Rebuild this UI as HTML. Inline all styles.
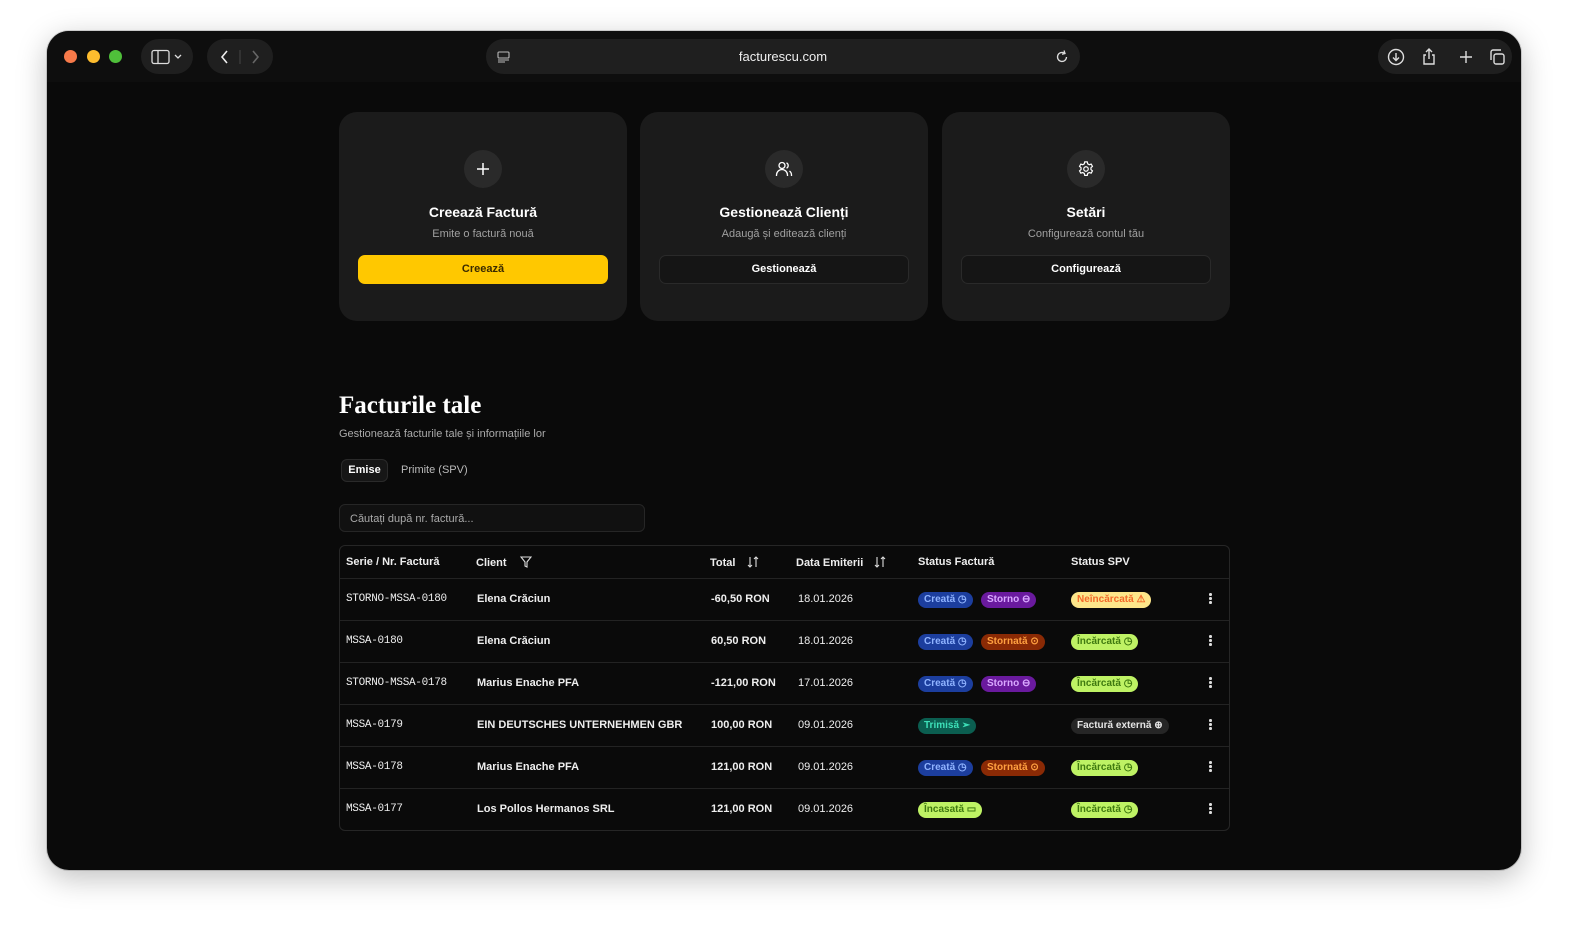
<!DOCTYPE html>
<html><head><meta charset="utf-8"><style>
*{box-sizing:border-box;margin:0;padding:0}
body{width:1596px;height:950px;background:#fff;font-family:"Liberation Sans",sans-serif;position:relative;overflow:hidden;color:#fff}
.win{position:absolute;left:47px;top:31px;width:1474px;height:839px;border-radius:22px;background:#0a0a0a;overflow:hidden;box-shadow:0 8px 30px rgba(0,0,0,.25),0 0 0 1px rgba(0,0,0,.15)}
.bar{position:absolute;left:0;top:0;width:100%;height:51px;background:#0e0e0e}
.dot{position:absolute;top:19px;width:13px;height:13px;border-radius:50%}
.pill{position:absolute;background:#1f1f1f;border-radius:18px}
.abs{position:absolute}
.card{position:absolute;top:81px;width:288px;height:209px;background:#1b1b1b;border-radius:18px;text-align:center}
.card .ic{position:absolute;left:125px;top:38px;width:38px;height:38px;border-radius:50%;background:#2a2a2a;display:flex;align-items:center;justify-content:center}
.card h3{position:absolute;top:92px;width:100%;font-size:14px;font-weight:bold}
.card p{position:absolute;top:116px;width:100%;font-size:11px;color:#a0a0a0}
.card .btn{position:absolute;left:19px;top:143px;width:250px;height:29px;border-radius:7px;background:#151515;border:1px solid #2a2a2a;font-size:11px;font-weight:bold;line-height:27px}
table{border-collapse:collapse}
.tbl{position:absolute;left:292px;top:514px;width:891px;height:286px;border:1px solid #262626;border-radius:6px;overflow:hidden}
.row{position:absolute;left:0;width:100%;height:42px;border-top:1px solid #232323;font-size:11px}
.row span{position:absolute;top:14px;font-weight:bold;color:#eee}
.mono{font-family:"Liberation Mono",monospace;font-weight:normal!important;letter-spacing:-.3px}
.b{position:absolute;top:13px;height:16px;border-radius:8px;font-size:10px;line-height:16px;padding:0 6px;font-weight:bold;white-space:nowrap}
.blue{background:#1c3e9e;color:#8fb3ff}.pur{background:#6a1a9e;color:#d9a8ff}.org{background:#8a2a05;color:#ffa040}
.ylw{background:#fde68a;color:#f36a2a}.grn{background:#bef264;color:#3f7a10}.teal{background:#0b5e50;color:#3de0b8}.gry{background:#262626;color:#e5e5e5}
.kebab{position:absolute;left:869px;top:14px;font-size:13px;color:#ddd;font-weight:bold;line-height:4px;width:4px;text-align:center}
.kebab i{display:block;width:2.5px;height:2.5px;background:#ddd;border-radius:50%;margin:0 0 1.5px}
.hd{position:absolute;top:10px;font-size:11px;font-weight:bold;color:#eee}
</style></head><body>
<div class="win">
<div class="bar">
<div class="dot" style="left:17px;background:#fe5f57;background:#f77a4a"></div>
<div class="dot" style="left:40px;background:#febc2e"></div>
<div class="dot" style="left:62px;background:#4fbf3a"></div>
<div class="pill" style="left:94px;top:8px;width:52px;height:35px"><svg class="abs" style="left:10px;top:10px" width="32" height="16" viewBox="0 0 32 16" fill="none" stroke="#ddd" stroke-width="1.3"><rect x="1" y="1.5" width="17" height="13" rx="2"/><line x1="7" y1="1.5" x2="7" y2="14.5"/><path d="M24 6l3 3 3-3"/></svg></div>
<div class="pill" style="left:160px;top:8px;width:66px;height:35px"><svg class="abs" style="left:10px;top:9px" width="48" height="18" viewBox="0 0 48 18" fill="none" stroke-width="1.6"><path d="M10 3l-5 6 5 6" stroke="#eee"/><line x1="23" y1="2" x2="23" y2="16" stroke="#444" stroke-width="1"/><path d="M36 3l5 6-5 6" stroke="#666"/></svg></div>
<div class="pill" style="left:439px;top:8px;width:594px;height:35px">
<svg class="abs" style="left:11px;top:12px" width="13" height="12" viewBox="0 0 13 12" fill="none" stroke="#bbb" stroke-width="1.1"><rect x="1" y="1" width="11" height="6" rx="1"/><line x1="1" y1="9" x2="12" y2="9"/><line x1="1" y1="11" x2="8" y2="11"/></svg>
<div class="abs" style="left:0;width:100%;top:10px;text-align:center;font-size:13px;color:#eee">facturescu.com</div>
<svg class="abs" style="left:569px;top:10px" width="14" height="15" viewBox="0 0 14 15" fill="none" stroke="#ddd" stroke-width="1.3"><path d="M11.5 8a4.5 4.5 0 1 1-2-3.8"/><path d="M9 1.5l1 3-3 .8"/></svg>
</div>
<div class="pill" style="left:1331px;top:8px;width:134px;height:35px">
<svg class="abs" style="left:8px;top:9px" width="120" height="18" viewBox="0 0 120 18" fill="none" stroke="#ddd" stroke-width="1.4"><circle cx="10" cy="9" r="7.5"/><path d="M10 5v7M7 9.5l3 3 3-3"/><path d="M40 7h-2v9h10V7h-2M43 1v10M40 4l3-3 3 3"/><path d="M74 9h12M80 3v12"/><rect x="108" y="6" width="10" height="10" rx="2"/><path d="M105 12V4a2 2 0 0 1 2-2h8"/></svg>
</div>
</div>

<div class="card" style="left:292px"><div class="ic"><svg width="14" height="14" viewBox="0 0 14 14" stroke="#fff" stroke-width="1.5"><path d="M7 1v12M1 7h12"/></svg></div><h3>Creează Factură</h3><p>Emite o factură nouă</p><div class="btn" style="background:#ffc800;border-color:#ffc800;color:#3a2a00">Creează</div></div>
<div class="card" style="left:593px"><div class="ic"><svg width="18" height="18" viewBox="0 0 18 18" fill="none" stroke="#fff" stroke-width="1.3"><circle cx="7" cy="5.5" r="3"/><path d="M1.5 16v-1a5 5 0 0 1 11 0v1"/><path d="M11.5 2.8a3 3 0 0 1 0 5.4M14.5 11a5 5 0 0 1 2 4v1"/></svg></div><h3>Gestionează Clienți</h3><p>Adaugă și editează clienți</p><div class="btn">Gestionează</div></div>
<div class="card" style="left:895px"><div class="ic"><svg width="18" height="18" viewBox="0 0 24 24" fill="none" stroke="#fff" stroke-width="1.6"><circle cx="12" cy="12" r="3"/><path d="M10.3 2.5h3.4l.6 2.6 2 1.2 2.6-.8 1.7 3-2 1.8v2.4l2 1.8-1.7 3-2.6-.8-2 1.2-.6 2.6h-3.4l-.6-2.6-2-1.2-2.6.8-1.7-3 2-1.8v-2.4l-2-1.8 1.7-3 2.6.8 2-1.2z"/></svg></div><h3>Setări</h3><p>Configurează contul tău</p><div class="btn">Configurează</div></div>

<div class="abs" style="left:292px;top:361px;font-family:'Liberation Serif',serif;font-size:25px;font-weight:bold">Facturile tale</div>
<div class="abs" style="left:292px;top:397px;font-size:11px;color:#aaa">Gestionează facturile tale și informațiile lor</div>
<div class="abs" style="left:294px;top:428px;width:47px;height:23px;border:1px solid #2a2a2a;background:#161616;border-radius:6px;font-size:11px;font-weight:bold;text-align:center;line-height:21px">Emise</div>
<div class="abs" style="left:354px;top:433px;font-size:11px;color:#bbb">Primite (SPV)</div>
<div class="abs" style="left:292px;top:473px;width:306px;height:28px;border:1px solid #262626;background:#111;border-radius:6px;font-size:11px;color:#aaa;padding:8px 10px">Căutați după nr. factură...</div>

<div class="tbl">
<div class="hd" style="left:6px">Serie / Nr. Factură</div>
<div class="hd" style="left:136px">Client <svg style="margin-left:10px;vertical-align:-2px" width="12" height="12" viewBox="0 0 12 12" fill="none" stroke="#ddd" stroke-width="1.1"><path d="M1 1h10L7 6v5L5 10V6z"/></svg></div>
<div class="hd" style="left:370px">Total <svg style="margin-left:8px;vertical-align:-2px" width="12" height="12" viewBox="0 0 12 12" fill="none" stroke="#ddd" stroke-width="1.1"><path d="M3 1v10M1 9l2 2 2-2M9 11V1M7 3l2-2 2 2"/></svg></div>
<div class="hd" style="left:456px">Data Emiterii <svg style="margin-left:8px;vertical-align:-2px" width="12" height="12" viewBox="0 0 12 12" fill="none" stroke="#ddd" stroke-width="1.1"><path d="M3 1v10M1 9l2 2 2-2M9 11V1M7 3l2-2 2 2"/></svg></div>
<div class="hd" style="left:578px">Status Factură</div>
<div class="hd" style="left:731px">Status SPV</div>

<div class="row" style="top:32px"><span class="mono" style="left:6px">STORNO-MSSA-0180</span><span style="left:137px">Elena Crăciun</span><span style="left:371px">-60,50 RON</span><span style="left:458px;font-weight:normal">18.01.2026</span><div class="b blue" style="left:578px">Creată ◷</div><div class="b pur" style="left:641px">Storno ⊖</div><div class="b ylw" style="left:731px">Neîncărcată ⚠</div><div class="kebab"><i></i><i></i><i></i></div></div>
<div class="row" style="top:74px"><span class="mono" style="left:6px">MSSA-0180</span><span style="left:137px">Elena Crăciun</span><span style="left:371px">60,50 RON</span><span style="left:458px;font-weight:normal">18.01.2026</span><div class="b blue" style="left:578px">Creată ◷</div><div class="b org" style="left:641px">Stornată ⊙</div><div class="b grn" style="left:731px">Încărcată ◷</div><div class="kebab"><i></i><i></i><i></i></div></div>
<div class="row" style="top:116px"><span class="mono" style="left:6px">STORNO-MSSA-0178</span><span style="left:137px">Marius Enache PFA</span><span style="left:371px">-121,00 RON</span><span style="left:458px;font-weight:normal">17.01.2026</span><div class="b blue" style="left:578px">Creată ◷</div><div class="b pur" style="left:641px">Storno ⊖</div><div class="b grn" style="left:731px">Încărcată ◷</div><div class="kebab"><i></i><i></i><i></i></div></div>
<div class="row" style="top:158px"><span class="mono" style="left:6px">MSSA-0179</span><span style="left:137px">EIN DEUTSCHES UNTERNEHMEN GBR</span><span style="left:371px">100,00 RON</span><span style="left:458px;font-weight:normal">09.01.2026</span><div class="b teal" style="left:578px">Trimisă ➢</div><div class="b gry" style="left:731px">Factură externă ⊕</div><div class="kebab"><i></i><i></i><i></i></div></div>
<div class="row" style="top:200px"><span class="mono" style="left:6px">MSSA-0178</span><span style="left:137px">Marius Enache PFA</span><span style="left:371px">121,00 RON</span><span style="left:458px;font-weight:normal">09.01.2026</span><div class="b blue" style="left:578px">Creată ◷</div><div class="b org" style="left:641px">Stornată ⊙</div><div class="b grn" style="left:731px">Încărcată ◷</div><div class="kebab"><i></i><i></i><i></i></div></div>
<div class="row" style="top:242px"><span class="mono" style="left:6px">MSSA-0177</span><span style="left:137px">Los Pollos Hermanos SRL</span><span style="left:371px">121,00 RON</span><span style="left:458px;font-weight:normal">09.01.2026</span><div class="b grn" style="left:578px">Încasată ▭</div><div class="b grn" style="left:731px">Încărcată ◷</div><div class="kebab"><i></i><i></i><i></i></div></div>
</div>
</div>
</body></html>
